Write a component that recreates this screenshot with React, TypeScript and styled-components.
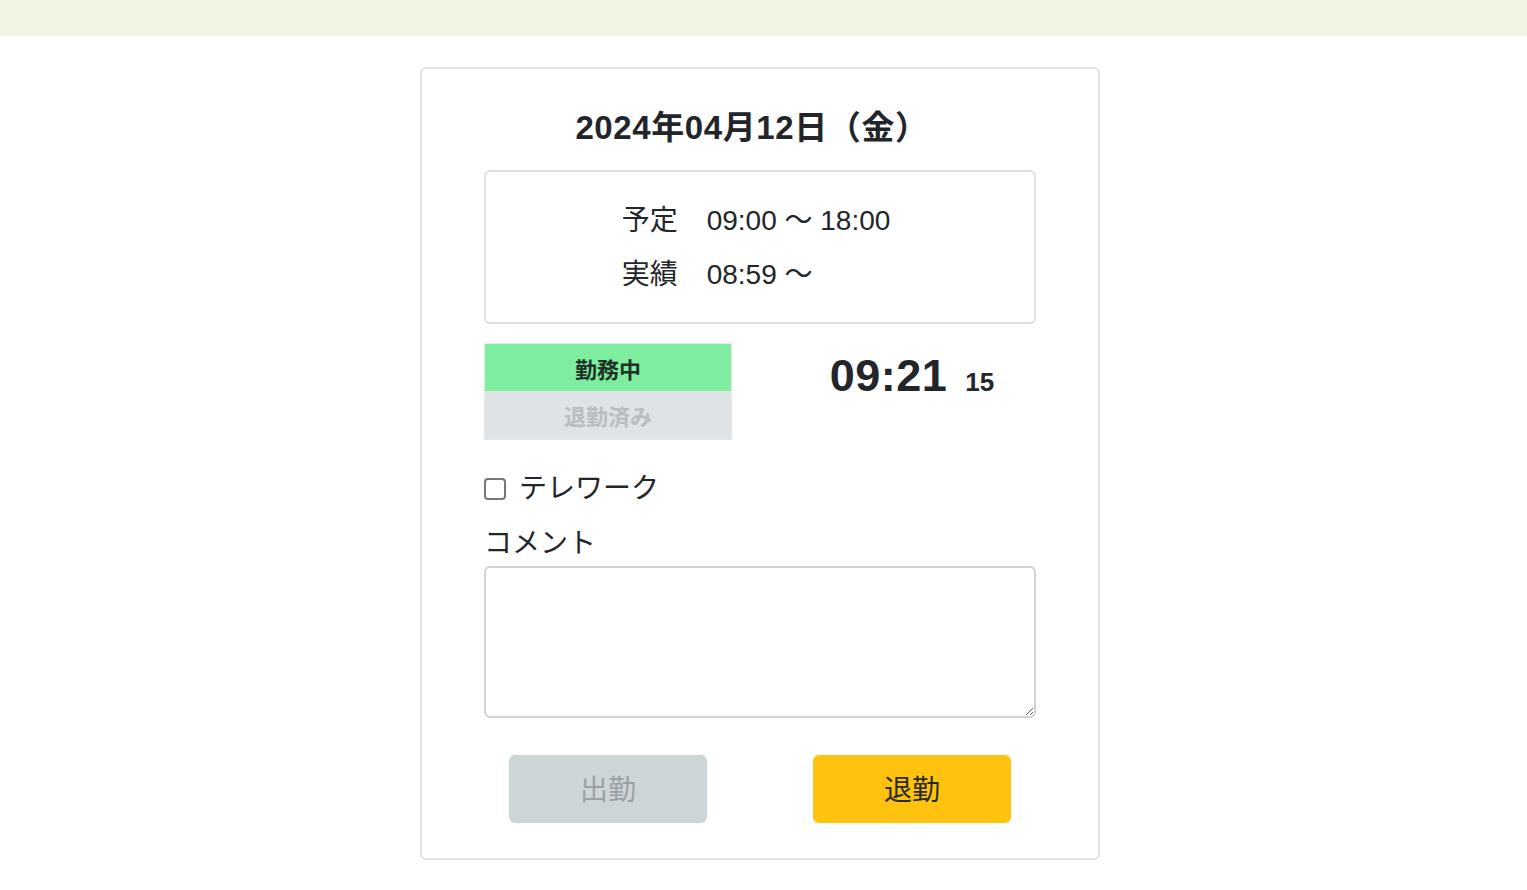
import styled, { createGlobalStyle } from "styled-components";

const GlobalStyle = createGlobalStyle`
  body {
    margin: 0;
    background: #ffffff;
    font-family: "Liberation Sans", "Noto Sans CJK JP", sans-serif;
    color: #222529;
  }
`;

const TopBar = styled.div`
  height: 36px;
  background: #f2f3e2;
`;

const Page = styled.div`
  display: flex;
  justify-content: center;
  padding: 31px 7px 0 0;
`;

const Card = styled.div`
  box-sizing: border-box;
  width: 680px;
  border: 2px solid #e3e3e3;
  border-radius: 6px;
  padding: 40px 62px 35px 62px;
  display: flex;
  flex-direction: column;
`;

const Title = styled.h1`
  margin: 0 0 23px;
  font-size: 33px;
  line-height: 38px;
  font-weight: 700;
  letter-spacing: 0.6px;
  text-align: center;
  padding-right: 16px;
`;

const ScheduleBox = styled.div`
  border: 2px solid #e0e0e0;
  border-radius: 6px;
  padding: 22px 0 20px;
  display: flex;
  justify-content: center;
`;

const ScheduleList = styled.div`
  display: flex;
  flex-direction: column;
  padding-right: 8px;
`;

const ScheduleRow = styled.div`
  font-size: 28px;
  line-height: 54px;
  display: flex;
`;

const RowLabel = styled.span`
  margin-right: 29px;
`;

const StatusRow = styled.div`
  display: grid;
  grid-template-columns: 248px 248px;
  justify-content: space-between;
  margin-top: 19px;
`;

const StatusBox = styled.div`
  display: flex;
  flex-direction: column;
  border: 1px solid #e4e8ea;
`;

const StatusItem = styled.div<{ $active?: boolean }>`
  height: ${(p) => (p.$active ? 47 : 48)}px;
  display: flex;
  align-items: center;
  justify-content: center;
  font-size: 22px;
  font-weight: 700;
  background: ${(p) => (p.$active ? "#7eed9f" : "#dee3e6")};
  color: ${(p) => (p.$active ? "#1f3326" : "#b9bdc0")};
`;

const Clock = styled.div`
  display: flex;
  justify-content: center;
  align-items: baseline;
  gap: 18px;
  padding-top: 6px;
  font-weight: 700;
`;

const ClockMain = styled.span`
  font-size: 45px;
  line-height: 53px;
  letter-spacing: 0.5px;
`;

const ClockSec = styled.span`
  font-size: 26px;
`;

const CheckRow = styled.label`
  display: flex;
  align-items: center;
  gap: 13px;
  margin-top: 29px;
  font-size: 28px;
  line-height: 40px;
`;

const CheckBox = styled.input`
  appearance: none;
  margin: 0;
  width: 22px;
  height: 22px;
  border: 2px solid #777;
  border-radius: 4px;
  background: #fff;
`;

const CommentLabel = styled.div`
  margin-top: 15px;
  font-size: 28px;
  line-height: 40px;
`;

const Comment = styled.textarea`
  box-sizing: border-box;
  margin-top: 2px;
  width: 100%;
  height: 152px;
  border: 2px solid #cdd3d8;
  border-radius: 6px;
  resize: vertical;
  font-size: 20px;
`;

const ButtonRow = styled.div`
  display: grid;
  grid-template-columns: 248px 248px;
  justify-content: space-between;
  justify-items: center;
  margin-top: 37px;
`;

const ActionButton = styled.button<{ $tone: "off" | "on" }>`
  width: 198px;
  height: 68px;
  border: none;
  border-radius: 6px;
  padding: 0 0 2px;
  font-family: inherit;
  font-size: 28px;
  background: ${(p) => (p.$tone === "on" ? "#ffc20e" : "#ccd5d8")};
  color: ${(p) => (p.$tone === "on" ? "#2a2a1a" : "#9ba1a3")};
`;

export default function App() {
  return (
    <>
      <GlobalStyle />
      <TopBar />
      <Page>
        <Card>
          <Title>2024年04月12日（金）</Title>
          <ScheduleBox>
            <ScheduleList>
              <ScheduleRow>
                <RowLabel>予定</RowLabel>09:00 〜 18:00
              </ScheduleRow>
              <ScheduleRow>
                <RowLabel>実績</RowLabel>08:59 〜
              </ScheduleRow>
            </ScheduleList>
          </ScheduleBox>
          <StatusRow>
            <StatusBox>
              <StatusItem $active>勤務中</StatusItem>
              <StatusItem>退勤済み</StatusItem>
            </StatusBox>
            <Clock>
              <ClockMain>09:21</ClockMain>
              <ClockSec>15</ClockSec>
            </Clock>
          </StatusRow>
          <CheckRow>
            <CheckBox type="checkbox" />
            テレワーク
          </CheckRow>
          <CommentLabel>コメント</CommentLabel>
          <Comment />
          <ButtonRow>
            <ActionButton $tone="off">出勤</ActionButton>
            <ActionButton $tone="on">退勤</ActionButton>
          </ButtonRow>
        </Card>
      </Page>
    </>
  );
}
